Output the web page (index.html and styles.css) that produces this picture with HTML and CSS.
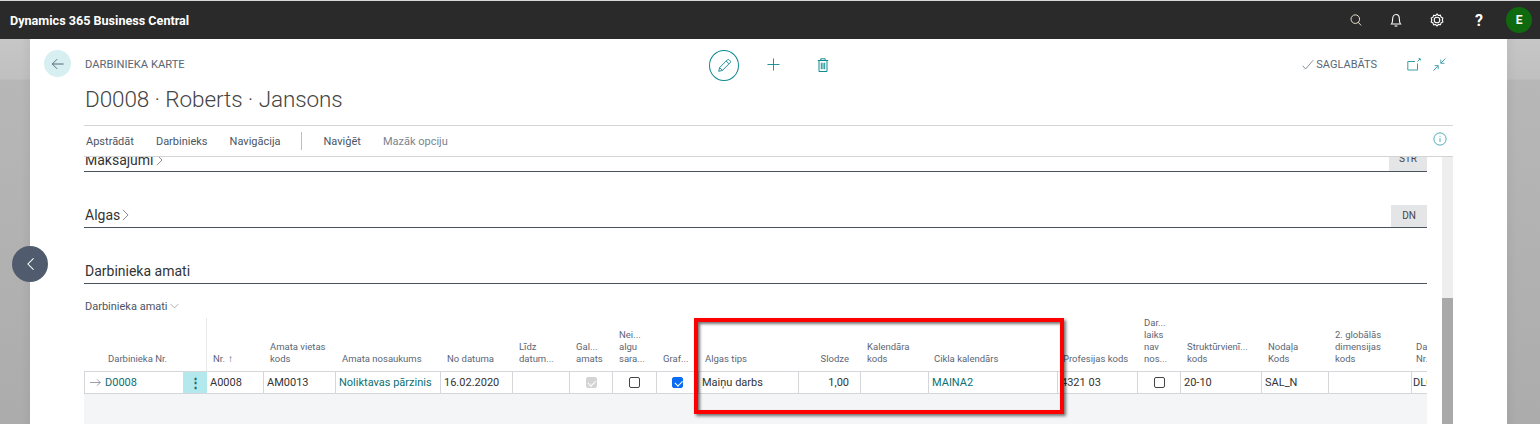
FILE: index.html
```html
<!DOCTYPE html>
<html lang="lv">
<head>
<meta charset="utf-8">
<title>Darbinieka karte</title>
<link rel="stylesheet" href="styles.css">
</head>
<body>
<header class="topbar">
  <div class="brand">Dynamics 365 Business Central</div>
  <div class="top-icons">
    <svg class="ti ti-search" viewBox="0 0 14 14"><circle cx="6.200" cy="6" r="5"/><path d="M9.600 9.600 13 13.400"/></svg>
    <svg class="ti ti-bell" viewBox="0 0 14 14"><path d="M2.500 11c1-1.200 1.100-2.400 1.100-4.600C3.600 3.600 5 1.500 7 1.500s3.400 2.100 3.400 4.900c0 2.200.1 3.400 1.100 4.600z"/><path d="M5.600 13h2.800"/></svg>
    <svg class="ti ti-gear" viewBox="0 0 16 16"><path d="M8 1 9.400 2.500l2-.3.6 1.900 1.800.9L13.300 7l.6 1.900-1.800.9-.6 1.900-2-.3L8 13l-1.400-1.500-2 .3-.6-1.900-1.800-.9L2.800 7l-.6-1.900L4 4.200l.6-1.900 2 .3z" transform="translate(0 1)"/><circle cx="8" cy="8" r="2.800"/></svg>
    <span class="help">?</span>
    <span class="avatar">E</span>
  </div>
</header>
<div class="stage">
  <div class="gutter gutter-left"></div>
  <main class="card">
    <div class="card-head">
      <button class="back" type="button" aria-label="Atpakaļ">
        <svg viewBox="0 0 16 16" class="back-ic"><path d="M14.500 8H1.500M7 2.500 1.500 8 7 13.500"/></svg>
      </button>
      <div class="kicker">DARBINIEKA KARTE</div>
      <div class="actions">
        <span class="edit"><svg viewBox="0 0 16 16" class="ic pencil"><path d="M1.800 14.200 2.800 10.200 11 2a1.400 1.400 0 0 1 2 0l1 1a1.400 1.400 0 0 1 0 2L5.800 13.200z M2.800 10.200 5.800 13.200 M9.800 3.200 12.800 6.200"/></svg></span>
        <svg viewBox="0 0 14 14" class="ic plus"><path d="M7 .5v13M.5 7h13"/></svg>
        <svg viewBox="0 0 12 14" class="ic trash"><path d="M.8 2.500h10.400M3.800 2.500V.8h4.400v1.700M2 2.500v11h8v-11M4.300 4.800v6.400M6 4.800v6.400M7.700 4.800v6.400"/></svg>
      </div>
      <div class="status">
        <svg viewBox="0 0 12 12" class="check"><path d="M.8 6.800 3.600 10 11.200 1.200"/></svg>
        <span class="saved">SAGLABĀTS</span>
        <svg viewBox="0 0 14 13" class="ic win"><path d="M10.500 5.500V12H.8V3.500H8"/><path d="M10.500 3.500 13 1M11.500.7h1.800v1.800"/></svg>
        <svg viewBox="0 0 16 16" class="ic win2"><path d="M1.500 14.500 6.500 9.500M2.800 9.200h3.800V13M14.500 1.500 9.500 6.500M9.400 2.800V6.700H13.200"/></svg>
      </div>
    </div>
    <h1 class="title">D0008 · Roberts · Jansons</h1>
    <nav class="menu">
      <span>Apstrādāt</span><span>Darbinieks</span><span>Navigācija</span>
      <i class="sep"></i>
      <span>Naviģēt</span><span class="muted">Mazāk opciju</span>
      <svg viewBox="0 0 16 16" class="info"><circle cx="8" cy="8" r="7"/><path d="M8 7v4.500M8 4.300v1.200"/></svg>
    </nav>
    <div class="scroller">
      <section class="fasttab cut">
        <h2>Maksājumi <svg viewBox="0 0 8 14" class="chev"><path d="M1 1l6 6-6 6"/></svg></h2>
        <span class="tag">STR</span>
      </section>
      <section class="fasttab second">
        <h2>Algas <svg viewBox="0 0 8 14" class="chev"><path d="M1 1l6 6-6 6"/></svg></h2>
        <span class="tag">DN</span>
      </section>
      <section class="fasttab third">
        <h2>Darbinieka amati</h2>
      </section>
      <div class="subhead">Darbinieka amati <svg viewBox="0 0 12 7" class="chev-d"><path d="M1 1l5 5 5-5"/></svg></div>

      <div class="grid">
        <div class="th th-name">Darbinieka Nr.</div><div class="th th-dots"></div>
        <div class="th">Nr. <span class="sort">↑</span></div>
        <div class="th"><span>Amata vietas<br>kods</span></div>
        <div class="th">Amata nosaukums</div>
        <div class="th">No datuma</div>
        <div class="th"><span>Līdz<br>datum...</span></div>
        <div class="th"><span>Gal...<br>amats</span></div>
        <div class="th"><span>Nei...<br>algu<br>sara...</span></div>
        <div class="th">Graf...</div>
        <div class="th">Algas tips</div>
        <div class="th th-right">Slodze</div>
        <div class="th"><span>Kalendāra<br>kods</span></div>
        <div class="th th-tight">Cikla kalendārs</div>
        <div class="th th-tight">Profesijas kods</div>
        <div class="th"><span>Dar...<br>laiks<br>nav<br>nos...</span></div>
        <div class="th"><span>Struktūrvienī...<br>kods</span></div>
        <div class="th"><span>Nodaļa<br>Kods</span></div>
        <div class="th"><span>2. globālās<br>dimensijas<br>kods</span></div>
        <div class="th th-clip"><span>Darba<br>Nr.</span></div>

        <div class="td td-name"><svg viewBox="0 0 14 10" class="row-arrow"><path d="M0 5h13M9 1l4 4-4 4"/></svg><a>D0008</a></div>
        <div class="td td-dots">⋮</div>
        <div class="td">A0008</div>
        <div class="td">AM0013</div>
        <div class="td td-link">Noliktavas pārzinis</div>
        <div class="td">16.02.2020</div>
        <div class="td"></div>
        <div class="td td-c"><span class="cb cb-off"></span></div>
        <div class="td td-c"><span class="cb"></span></div>
        <div class="td td-c"><span class="cb cb-on"></span></div>
        <div class="td">Maiņu darbs</div>
        <div class="td td-right">1,00</div>
        <div class="td"></div>
        <div class="td td-link">MAINA2</div>
        <div class="td">4321 03</div>
        <div class="td td-c"><span class="cb"></span></div>
        <div class="td">20-10</div>
        <div class="td">SAL_N</div>
        <div class="td"></div>
        <div class="td td-clip">DL0</div>
      </div>
      <div class="grid-empty"></div>
    </div>
    <div class="track"><div class="thumb"></div></div>
    <div class="highlight"></div>
  </main>
  <div class="gutter gutter-right"></div>
  <button class="prev" type="button" aria-label="Iepriekšējais">
    <svg viewBox="0 0 10 16" class="prev-ic"><path d="M8.500 1.500 2 8l6.500 6.500"/></svg>
  </button>
</div>
</body>
</html>
```
FILE: styles.css
```css
* { box-sizing: border-box; }
html, body { margin: 0; height: 100%; }
body {
  width: 1540px; height: 424px; overflow: hidden;
  font-family: Roboto, "Open Sans", sans-serif;
  color: #333; background: #fff;
  border-top: 1px solid #d8d8d8;
  display: flex; flex-direction: column;
}
.topbar {
  height: 38px; flex: none; background: #2a2a2a;
  display: flex; align-items: center; justify-content: space-between;
  padding: 0 8px 0 10px;
}
.brand { color: #fff; font-size: 12.600px; font-weight: 700; }
.top-icons { display: flex; align-items: center; }
.ti { fill: none; stroke: #fff; stroke-width: 1.100; margin-right: 26px; }
.ti-search { width: 12px; height: 12px; margin-right: 27px; stroke: #f0ead6; }
.ti-bell { width: 14px; height: 14px; }
.ti-gear { width: 16px; height: 16px; }
.help { color: #fff; font-size: 16px; font-weight: 700; width: 16px; text-align: center; margin-right: 19px; }
.avatar {
  width: 26px; height: 26px; border-radius: 50%; background: #0f6a0f; color: #fff;
  font-size: 12px; font-weight: 700; display: flex; align-items: center; justify-content: center;
}
.stage { flex: 1; display: flex; position: relative; min-height: 0; }
.gutter { flex: none; }
.gutter-left { width: 30px; background: linear-gradient(90deg, rgba(0,0,0,0) 70%, rgba(0,0,0,.04)), linear-gradient(#c6c6c6 0, #c0c0c0 40px, #b7b7b7 41px, #acacac 100%); }
.gutter-right { width: 33px; background: linear-gradient(90deg, rgba(0,0,0,.04), rgba(0,0,0,0) 30%), linear-gradient(#c6c6c6 0, #c0c0c0 40px, #b7b7b7 41px, #acacac 100%); }
.card { flex: 1; background: #fff; position: relative; padding: 0 54px 0 54px; display: flex; flex-direction: column; min-width: 0; }
.card-head { height: 50px; flex: none; position: relative; }
.back {
  position: absolute; left: -40px; top: 11px; width: 27px; height: 27px; border: 0; padding: 0;
  border-radius: 50%; background: #d7eff1; display: flex; align-items: center; justify-content: center;
}
.back-ic { width: 14px; height: 14px; fill: none; stroke: #4a5568; stroke-width: 1; }
.kicker { font-size: 11.200px; color: #5b6675; padding: 19px 0 0 1px; }
.actions { position: absolute; left: 625px; top: 11px; display: flex; align-items: center; }
.edit { width: 30px; height: 31px; border: 1px solid #108a92; border-radius: 50%; display: flex; align-items: center; justify-content: center; }
.ic { fill: none; stroke: #108a92; stroke-width: 1; }
.pencil { width: 15px; height: 15px; }
.plus { margin: 0 0 2px 28px; width: 13px; height: 13px; }
.trash { margin: 0 0 2px 37px; width: 12px; height: 14px; }
.status { position: absolute; right: 6px; top: 18px; display: flex; align-items: center; }
.check { width: 12px; height: 12px; fill: none; stroke: #7b8794; stroke-width: .9; margin-right: 2px; }
.saved { font-size: 11px; color: #5b6675; margin-right: 30px; }
.win { width: 14px; height: 13px; margin-right: 11px; stroke: #3b9ea5; }
.win2 { width: 15px; height: 15px; stroke: #3b9ea5; }
.title { margin: 0; flex: none; font-size: 22.500px; font-weight: 300; letter-spacing: -.1px; color: #444; height: 36px; line-height: 20px; white-space: nowrap; padding-left: 1px; }
.menu {
  height: 32px; flex: none; border-top: 1px solid #d4d4d4; border-bottom: 1px solid #d4d4d4;
  display: flex; align-items: center; font-size: 11px; color: #4b5563; gap: 22px; padding-left: 2px;
  position: relative;
}
.menu .muted { color: #7b8490; }
.sep { width: 1px; height: 18px; background: #b9bec5; margin-left: -2px; }
.info { position: absolute; right: 6px; top: 6px; width: 14px; height: 14px; fill: none; stroke: #38a3ab; stroke-width: 1; }
.scroller { flex: 1; overflow: hidden; width: 1343px; min-height: 0; }
.fasttab { position: relative; border-bottom: 1px solid #4a5260; display: flow-root; }
.fasttab h2 { margin: 0; padding-left: 1px; font-size: 14px; font-weight: 400; color: #333; display: flex; align-items: center; gap: 2px; line-height: 20px; }
.chev { width: 7px; height: 12px; fill: none; stroke: #666; stroke-width: .9; }
.cut { height: 15px; }
.cut h2 { margin-top: -7px; }
.second { height: 23px; margin-top: 33px; }
.third { height: 24px; margin-top: 32px; padding-top: 1px; }
.tag { position: absolute; right: 0; bottom: 0; background: #e4e5e7; font-size: 10px; color: #444; width: 36px; height: 22px; text-align: center; line-height: 22px; }
.cut .tag { bottom: 0; height: 23px; width: 38px; }
.subhead { font-size: 11px; color: #4b5563; margin-top: 12px; padding-left: 1px; height: 20px; display: flex; align-items: center; gap: 2px; }
.chev-d { width: 9px; height: 6px; fill: none; stroke: #777; stroke-width: .8; }
.grid {
  display: grid; width: 1343px; margin-top: 2px;
  grid-template-columns: 99px 24px 57px 72px 105px 72px 57px 43px 44px 42px 100px 62px 68px 129px 80px 43px 81px 67px 83px 15px;
  grid-template-rows: 54px 22px;
}
.th {
  font-size: 9.500px; line-height: 12px; color: #5b6675; padding: 0 0 6px 6px;
  display: flex; align-items: flex-end; overflow: hidden; white-space: nowrap;
  border-bottom: 1px solid #d4d6da;
}
.th-name { padding-left: 24px; }
.th-dots { border-right: 1px solid #e8e8e8; }
.th-right { justify-content: flex-end; padding-right: 12px; }
.th-tight { padding-left: 5px; }
.th-clip { padding-left: 4px; }
.sort { margin-left: 3px; font-size: 10px; }
.td {
  font-size: 11px; line-height: 21px; padding: 0 3px; white-space: nowrap; overflow: hidden;
  border-right: 1px solid #d4d6da; border-bottom: 1px solid #d4d6da; color: #333; background: #fff;
}
.td-name { border-left: 1px solid #d4d6da; padding-left: 5px; border-right: 0; display: flex; align-items: center; gap: 4px; color: #0b6f72; }
.row-arrow { width: 11px; height: 9px; fill: none; stroke: #667; stroke-width: .8; }
.td-dots { background: #b3e8ec; color: #0e6a78; text-align: center; border-right: 0; font-weight: 700; font-size: 13px; }
.td-link { color: #0b6f72; }
.td-right { text-align: right; padding-right: 11px; }
.td-c { display: flex; align-items: center; justify-content: center; }
.td-clip { border-right: 0; padding-left: 1px; }
.cb { width: 11px; height: 11px; border: 1px solid #444; border-radius: 2px; background: #fff; position: relative; }
.cb-off { background: #d4d4d4; border-color: #d4d4d4; }
.cb-on { background: #0a6cf0; border-color: #0a6cf0; }
.cb-off::after, .cb-on::after { content: ""; position: absolute; left: 1.500px; top: 1.500px; width: 6px; height: 3.500px; border-left: 1.300px solid #fff; border-bottom: 1.300px solid #fff; transform: rotate(-45deg); }
.grid-empty { height: 40px; background: #f4f5f6; width: 1343px; }
.track { position: absolute; left: 1412px; top: 118px; width: 11px; bottom: 0; background: #eeeeee; }
.thumb { position: absolute; left: 0; right: 0; top: 141px; bottom: 0; background: #a9a9a9; }
.highlight {
  position: absolute; left: 664px; top: 279px; width: 370px; height: 96px;
  border: 4px solid #f00; box-shadow: 2px 2px 3px rgba(0,0,0,.55), inset 2px 2px 3px rgba(0,0,0,.55);
  pointer-events: none;
}
.prev {
  position: absolute; left: 12px; top: 207px; width: 36px; height: 36px; border: 0; padding: 0;
  border-radius: 50%; background: #505c6e; display: flex; align-items: center; justify-content: center;
}
.prev-ic { width: 9px; height: 14px; fill: none; stroke: #fff; stroke-width: 1.200; }
```
